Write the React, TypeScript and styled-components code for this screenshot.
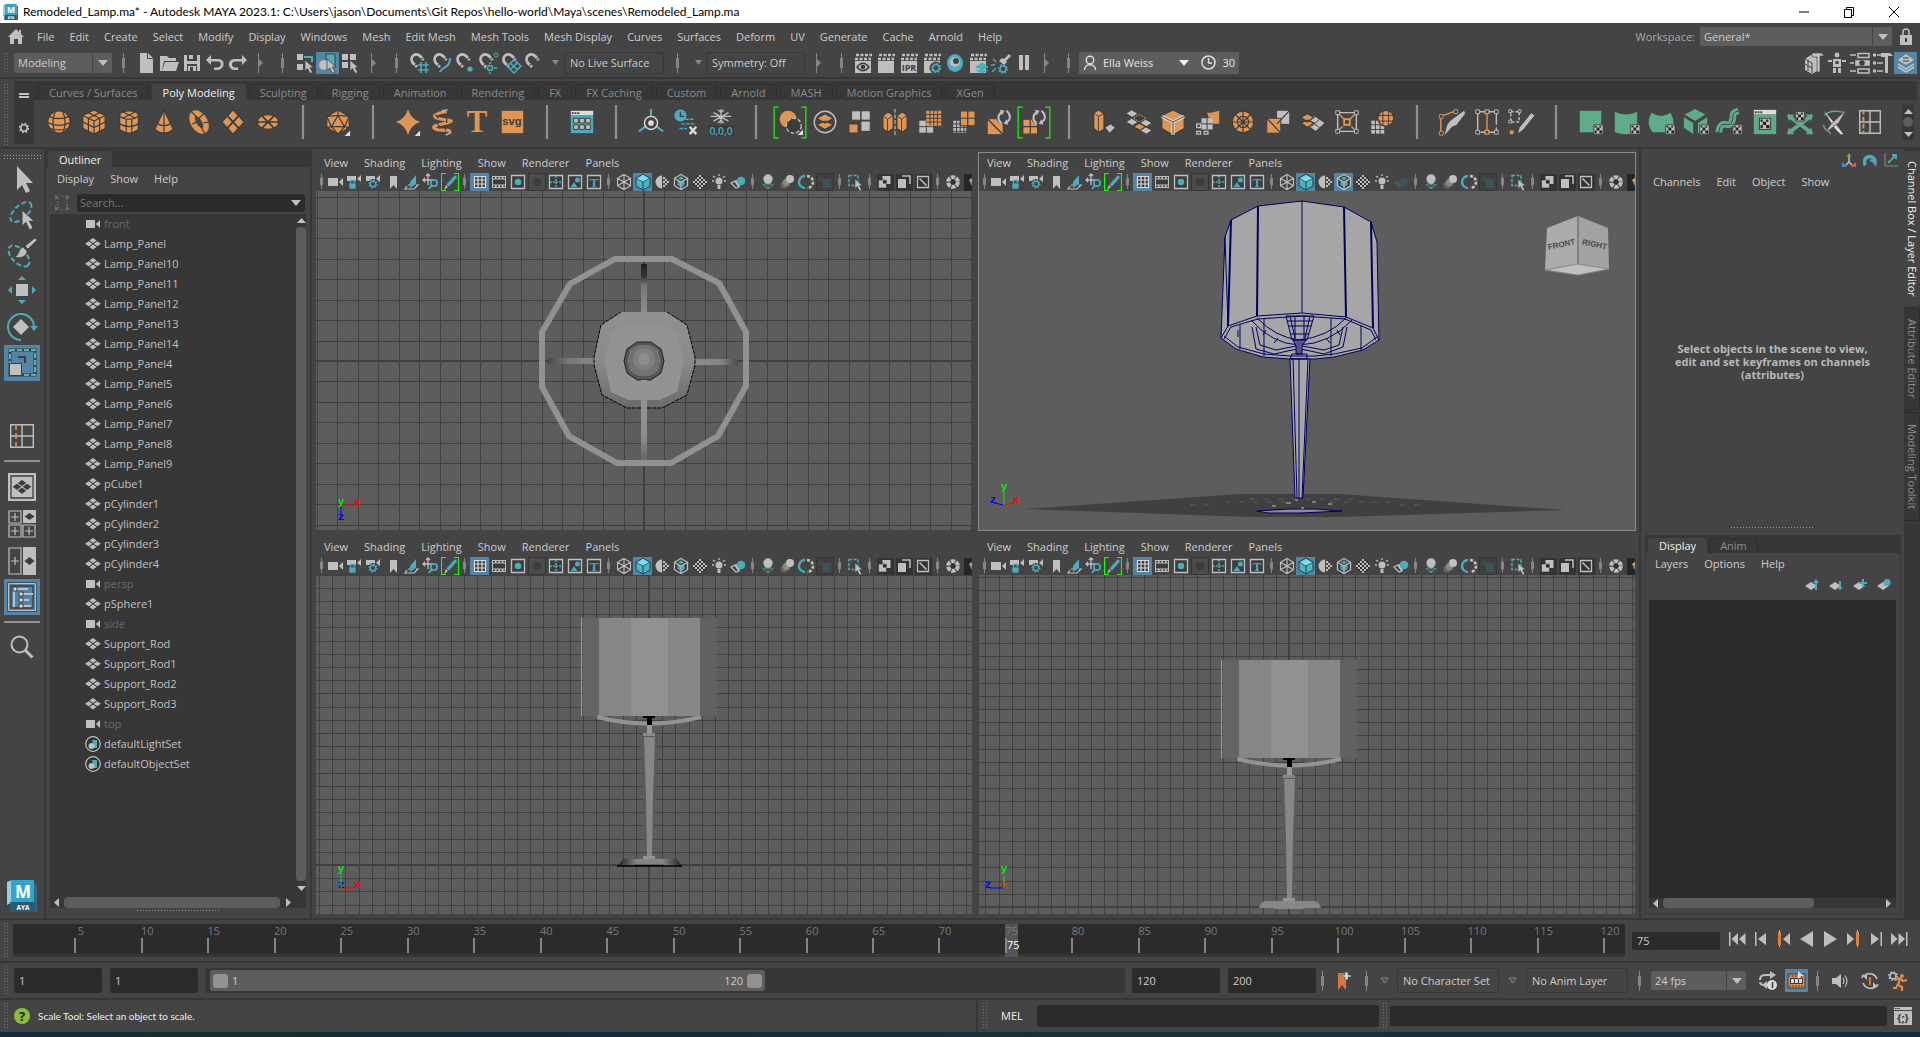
import React from "react";
import styled, { createGlobalStyle, css } from "styled-components";

const c = {
  bg: "#444444",
  dark: "#373737",
  deep: "#2b2b2b",
  mid: "#5d5d5d",
  text: "#cccccc",
  dim: "#8c8c8c",
  grey: "#bfbfbf",
  teal: "#4aacbc",
  orange: "#df9553",
  green: "#5fad88",
  blue: "#5285a6",
};

const Global = createGlobalStyle`
  * { box-sizing: border-box; }
  body { margin: 0; background: ${c.bg}; }
  button, input, select { font: inherit; color: inherit; border: 0; margin: 0; padding: 0; background: none; border-radius: 0; }
  ul { list-style: none; margin: 0; padding: 0; }
`;

const Shell = styled.div`
  min-height: 100vh;
  display: flex;
  flex-direction: column;
  font: 11px/14px "Open Sans", "Noto Sans", sans-serif;
  color: ${c.text};
  background: ${c.bg};
`;

/* ---------- shared parts ---------- */
const Svg = styled.svg<{ $w: number; $h?: number }>`
  display: block;
  flex: none;
  width: ${(p) => p.$w}px;
  height: ${(p) => p.$h ?? p.$w}px;
`;
const IconButton = styled.button<{ $w: number; $h: number; $on?: boolean }>`
  display: flex;
  flex: none;
  align-items: center;
  justify-content: center;
  width: ${(p) => p.$w}px;
  height: ${(p) => p.$h}px;
  background: ${(p) => (p.$on ? c.blue : "transparent")};
`;
const DotsV = styled.div`
  flex: none;
  width: 5px;
  align-self: stretch;
  margin: 2px 0;
  background: radial-gradient(circle, #858585 0 1px, transparent 1px) 0 0 / 3px 3px;
  opacity: 0.7;
`;
const DotsH = styled.div<{ $w: number; $h?: number }>`
  flex: none;
  width: ${(p) => p.$w}px;
  height: ${(p) => p.$h ?? 3}px;
  background: radial-gradient(circle, #9a9a9a 0 1px, transparent 1px) 0 0 / 3px 3px;
`;
const SepCell = styled.div<{ $w: number }>`
  flex: none;
  display: flex;
  justify-content: center;
  width: ${(p) => p.$w}px;
`;
const Field = styled.input<{ $w?: number; $h: number; $line?: boolean }>`
  flex: ${(p) => (p.$w ? "none" : "1 1 0")};
  min-width: 0;
  width: ${(p) => (p.$w ? p.$w + "px" : "auto")};
  height: ${(p) => p.$h}px;
  padding: 0 5px;
  border-radius: 2px;
  background: ${(p) => (p.$line ? c.bg : c.deep)};
  border: ${(p) => (p.$line ? "1px solid #373737" : "0")};
`;
const ComboWrap = styled.span<{ $w: number; $h: number }>`
  display: grid;
  flex: none;
  width: ${(p) => p.$w}px;
  height: ${(p) => p.$h}px;
  background: ${c.mid};
  border-radius: 2px;
  select, span { grid-area: 1 / 1; }
  select { appearance: none; padding: 0 22px 0 4px; outline: 0; }
  span {
    justify-self: end;
    display: flex;
    align-items: center;
    justify-content: center;
    width: 20px;
    border-left: 1px solid ${c.bg};
    pointer-events: none;
  }
`;
const Combo = ({ label, value, w, h }: { label: string; value: string; w: number; h: number }) => (
  <ComboWrap $w={w} $h={h}>
    <select aria-label={label} defaultValue={value}>
      <option>{value}</option>
    </select>
    <span>
      <Svg $w={10} $h={6} viewBox="0 0 10 6"><path d="M0 0h10L5 6z" fill={c.grey} /></Svg>
    </span>
  </ComboWrap>
);
const Sep = ({ w = 22, h = 20 }: { w?: number; h?: number }) => (
  <SepCell $w={w}>
    <Svg $w={3} $h={h} viewBox="0 0 3 20" preserveAspectRatio="none">
      <path d="M1 0h1v20H1z" fill="#858585" /><path d="M0 5h3v10H0z" fill="#858585" />
    </Svg>
  </SepCell>
);
const SepTri = ({ w = 22 }: { w?: number }) => (
  <SepCell $w={w}>
    <Svg $w={5} $h={20} viewBox="0 0 5 20"><path d="M0 0h1v20H0zM1 6l4 4-4 4z" fill="#858585" /></Svg>
  </SepCell>
);
const MenuRow = styled.nav<{ $pad?: number; $h: number; $gap?: number }>`
  display: flex;
  flex: none;
  align-items: center;
  gap: ${(p) => p.$gap ?? 16}px;
  height: ${(p) => p.$h}px;
  padding-left: ${(p) => p.$pad ?? 8}px;
  white-space: nowrap;
`;
const Menu = ({ items, pad, h, gap }: { items: string[]; pad?: number; h: number; gap?: number }) => (
  <MenuRow $pad={pad} $h={h} $gap={gap}>{items.map((i) => <button key={i}>{i}</button>)}</MenuRow>
);
const Spacer = styled.div`
  flex: 1;
`;

/* ---------- icons ---------- */
type Draw = React.ReactNode;
const K = "#3c3c3c";
const cursor = (x: number, y: number, s = 1) => (
  <path transform={`translate(${x} ${y}) scale(${s})`} d="M0 0v13l3-3 3 6 3-1.500-3-5.500h4z" fill={c.grey} stroke={K} strokeWidth=".8" />
);
const checker = (x: number, y: number) => (
  <g transform={`translate(${x} ${y})`}>
    <path d="M0 0h10v10H0z" fill={c.grey} stroke={c.bg} />
    <path d="M1 1h2v2H1zM6 1h2v2H6zM3 3h3v3H3zM1 6h2v3H1zM6 6h3v3H6z" fill="#222" />
  </g>
);
const arrows = (x: number, y: number) => (
  <g transform={`translate(${x} ${y})`} fill="none" stroke={c.grey} strokeWidth="2.200">
    <path d="M5 15C0 11 0 5 6 2M10 1c5 4 5 10-1 13" />
    <path d="M3 0l5 1-3 5zM12 16l-5-1 3-5z" fill={c.grey} stroke="none" />
  </g>
);
const magnet = (
  <g transform="rotate(-8 8 8)">
    <path d="M7 15L3.500 10.500C0 4 8-1 12 5l2.500 4" fill="none" stroke={c.grey} strokeWidth="2.800" />
    <path d="M4 14l4-3M12 8l4-2" stroke={c.bg} strokeWidth="1" />
  </g>
);
const clapper = (
  <>
    <path d="M3 9h16v12H3z" fill={c.grey} />
    <path d="M3 7h16M4 3h16" stroke={c.grey} strokeWidth="2.400" strokeDasharray="3 1.500" />
  </>
);
const gear = (x: number, y: number, r: number, col: string) => (
  <g transform={`translate(${x} ${y})`} fill="none" stroke={col}>
    <circle r={r} strokeWidth={r * 0.5} />
    <circle r={r * 1.4} strokeWidth={r * 0.45} strokeDasharray={`${r * 0.55} ${r * 0.55}`} />
  </g>
);
/* checkerboard squares that fall inside a circle of radius r */
const checkDisc = (r: number, from: number) => {
  let d = "";
  for (let y = -r; y < r; y += 2)
    for (let x = -r; x < r; x += 2)
      if ((x + y) % 4 === 0 && x >= from && Math.hypot(x + 1, y + 1) < r) d += `M${9 + x} ${9 + y}h2v2h-2z`;
  return d;
};

const toolIcons: Record<string, Draw> = {
  new: <path d="M5 1h7v6h6v14H5zM13 1l5 5h-5z" fill={c.grey} />,
  open: <path d="M2 4h7l2 2h7v3H6L4 19H2zM7 10h14l-3 9H4z" fill={c.grey} />,
  save: <><path d="M3 3h16v16H3z" fill={c.grey} /><path d="M6 3h10v6H6zM6 12h10v7H6z" fill={c.bg} /><path d="M8 3h4v4H8zM7 14h8v5H7z" fill={c.grey} /><path d="M9 15h3v4H9z" fill={c.bg} /></>,
  undo: <path d="M7 3L2 8l5 5V9.500h7c4 0 4 6-1 6h-3V18h4c7-1 8-11 0-11H7z" fill={c.grey} />,
  redo: <path d="M15 3l5 5-5 5V9.500H8c-4 0-4 6 0 6h3V18H7C0 17 0 7 8 7h7z" fill={c.grey} />,
  hier: <><path d="M3 2h6v6H3zM3 12h6v6H3zM9 4h3M11 8h1v2" fill={c.grey} /><path d="M10 5h8v5" fill="none" stroke={c.teal} strokeWidth="2" />{cursor(11, 8, 0.85)}</>,
  obj: <><path d="M9 2h9v12H9z" fill={c.teal} stroke={K} /><circle cx="7" cy="13" r="5" fill={c.grey} />{cursor(10, 7, 0.9)}</>,
  comp: <><path d="M2 2h6v6H2zM10 2h6v6h-6zM2 10h6v6H2z" fill={c.grey} />{cursor(10, 8, 0.85)}</>,
  mGrid: <>{magnet}<path d="M9 13h11M9 18h11M12 10v11M17 10v11" stroke={c.teal} strokeWidth="1.600" /></>,
  mCurve: <>{magnet}<path d="M8 20c2-6 10-3 10-14" fill="none" stroke={c.teal} strokeWidth="2.200" /></>,
  mPoint: <>{magnet}<circle cx="15" cy="17" r="2.600" fill={c.teal} /></>,
  mCenter: <>{magnet}<g fill="none" stroke={c.teal}><circle cx="12" cy="16" r="2.500" strokeWidth="1.500" /><path d="M12 10v2M12 20v2M6 16h2M16 16h3" strokeWidth="1.500" /><circle cx="18" cy="3" r="2" /></g></>,
  mPlane: <>{magnet}<path d="M13 8l7 6-7 7-7-7zM9 11l8 7M17 10l-8 8" fill="none" stroke={c.teal} strokeWidth="1.500" /></>,
  mLive: magnet,
  rView: <>{clapper}<path d="M5 15c4-5 8-5 12 0-4 5-8 5-12 0z" fill="none" stroke={K} strokeWidth="1.400" /><circle cx="11" cy="15" r="2.300" fill={K} /></>,
  rSeq: clapper,
  ipr: <>{clapper}<text x="11" y="19" fontSize="9" fontWeight="700" textAnchor="middle" fill={K} fontFamily="Open Sans">IPR</text></>,
  rSet: <>{clapper}<circle cx="15" cy="16" r="6.500" fill={c.bg} />{gear(15, 16, 3.2, c.teal)}</>,
  ring: <><ellipse cx="11" cy="11" rx="8" ry="9" fill={c.teal} /><circle cx="11" cy="10" r="5" fill={c.grey} /><circle cx="12" cy="9" r="3" fill={c.bg} /></>,
  rLay: <>{clapper}<path d="M15 11l6 4-6 3-6-3zM9 18l6 3 6-3" fill={c.teal} stroke={c.teal} /></>,
  light: <><path d="M19 2l2 2-5 5 1 1-3 3-5-4 3-3 2 1z" fill={c.grey} /><path d="M1 13h4M3 7l3 3M2 20l4-4" stroke={c.teal} strokeWidth="1.500" />{gear(13, 17, 3, c.teal)}</>,
  pause: <path d="M6 3h4v15H6zM12 3h4v15h-4z" fill={c.grey} />,
  mkit: <><path d="M2 7l6-4 6 3v13l-5 3-7-4z" fill={c.grey} /><path d="M2 7l7 4v10M5 8v11M2 12l7 4" stroke={c.bg} fill="none" /><path d="M9 1h8c2 0 3 1 4 3h-4v16h-3V5H9z" fill={c.grey} stroke={c.bg} strokeWidth=".6" /></>,
  human: <g fill={c.grey}><circle cx="11" cy="3" r="2.400" /><path d="M7 7h8v8H7zM2 8h4v2H2zM16 8h4v2h-4zM7 16h3v5H7zM12 16h3v5h-3z" /><path d="M9.500 9h3v3h-3z" fill={c.bg} /></g>,
  attr: <g fill="none" stroke={c.grey} strokeWidth="1.600"><path d="M1 3h6M1 11h4M1 19h6M9 1.500h11v4H9zM9 17h11v4H9z" /><path d="M7 9h13v4H7z" fill={c.grey} /><circle cx="13" cy="11" r="2" fill={K} stroke={K} /></g>,
  tset: <g fill="none" stroke={c.grey} strokeWidth="1.600"><path d="M5 3h4M5 11h6M5 19h6" /><path d="M1 3h3M1 11h3M1 19h3" strokeWidth="3" /><path d="M9 1h8c2 0 3 2 4 3h-5v17h-3V5H9z" fill={c.grey} stroke="none" /></g>,
  chan: <g><path d="M11 2l8 6-8 5-8-5z" fill={c.grey} /><path d="M3 12l8 5 8-5M3 15l8 5 8-5" stroke={c.grey} fill="none" strokeWidth="1.600" /><path d="M8 6h6M8 9h6" stroke={K} /></g>,
};

const camera = <path d="M1 5h10v8H1zM12 9l4-4v8z" fill={c.grey} />;
const cube = (fill: string, line: string) => (
  <g fill={fill} stroke={line} strokeLinejoin="round"><path d="M9 1l7 4v8l-7 4-7-4V5z" /><path d="M2 5l7 4 7-4M9 9v8" fill="none" /></g>
);
const frame = (inner: Draw) => <><path d="M2.500 2.500h13v13h-13z" fill={K} stroke={c.grey} strokeWidth="1.300" />{inner}</>;
const viewIcons: Record<string, Draw> = {
  cam: camera,
  camLock: <><path d="M1 3h9v5H1zM11 6l4-4v7z" fill={c.grey} /><path d="M3 10h7v6H3z" fill={c.teal} stroke={c.bg} strokeWidth=".6" /><path d="M4.500 10V7.500h4V10" stroke={c.teal} fill="none" strokeWidth="1.400" /></>,
  camGear: <><path d="M1 3h9v5H1zM11 6l4-4v7z" fill={c.grey} /><circle cx="8" cy="11" r="5" fill={c.bg} />{gear(8, 11, 2.8, c.teal)}</>,
  mark: <path d="M6 3h7v13l-3.500-4L6 16z" fill={c.grey} />,
  plane: <><path d="M7 9l6-7v9l-6 4z" fill={c.teal} /><path d="M5 12h2M13 12h2l-4 4H2l2-3" fill="none" stroke={c.grey} strokeWidth="1.200" /></>,
  pan: <><path d="M6 1v11M1 7h10M4 3l2-2 2 2M3 5L1 7l2 2" stroke={c.grey} fill="none" strokeWidth="1.300" /><circle cx="12" cy="10" r="3.200" fill={c.bg} stroke={c.teal} strokeWidth="1.700" /><path d="M10 12l-3 4" stroke={c.teal} strokeWidth="2" /></>,
  pencil: <><path d="M14 2l2 2.500-8 9-2.500-2z" fill={c.teal} /><path d="M5 12l2 2-4 3z" fill={c.grey} /><path d="M5 .5H.5v17H5M13 .5h4.500v17H13" fill="none" stroke="#1f0" strokeWidth="1.200" /></>,
  grid: <path d="M3.500 3.500h11v11h-11zM3.500 7h11M3.500 11h11M7 3.500v11M11 3.500v11" fill={K} stroke="#ddd" strokeWidth="1.200" />,
  film: <><path d="M2 3h14v12H2z" fill={c.grey} /><path d="M3 6.500h12v5H3z" fill={K} /><path d="M3 4.700h12M3 13.300h12" stroke={K} strokeDasharray="2 1.500" strokeWidth="1.400" /></>,
  res: frame(<circle cx="9" cy="9" r="3.300" fill={c.teal} />),
  gate: <><path d="M.5.500h17v17H.5z" fill="#4b4b4b" stroke="#353535" /><circle cx="9" cy="9" r="4" fill={K} /></>,
  chart: frame(<path d="M3 9h12M9 3v12" stroke={c.teal} strokeDasharray="2 1" strokeWidth="1.600" />),
  safe: frame(<><path d="M4.500 14l3.500-5 3.500 5z" fill={c.teal} /><circle cx="11.500" cy="7" r="2.500" fill={c.teal} /></>),
  title: frame(<text x="9" y="13.500" fontSize="13" fontWeight="700" fontFamily="Liberation Serif" textAnchor="middle" fill={c.teal}>T</text>),
  wire: <><path d="M9 1.500l6.500 3.800v7.400L9 16.500l-6.500-3.800V5.300zM2.500 5.300L9 9l6.500-3.700M9 9v7.500M9 1.500V9M2.500 12.700L9 9l6.500 3.700" fill="none" stroke={c.grey} strokeWidth="1.100" /></>,
  shade: <>{cube("#4fb4c4", "#21434b")}<path d="M9 2l6 3.500L9 8.500 3 5.500z" fill="#7fdbe6" /></>,
  half: <><circle cx="9" cy="9" r="6.500" fill="#4c4c4c" /><path d="M9 2.500a6.500 6.500 0 000 13z" fill={c.grey} /><path d={checkDisc(7, 1)} fill={c.grey} /></>,
  wshade: <><path d="M9 1.500l6.500 3.800v7.400L9 16.500l-6.500-3.800V5.300z" fill={K} stroke={c.grey} strokeWidth="1.300" /><path d="M5.500 7l3 2v5l-3-2zM12.500 7l-3 2v5l3-2zM9 3.500l3 1.700-3 1.700-3-1.700z" fill={c.teal} /><path d="M2.500 5.300L9 9l6.500-3.700M9 9v7.500" fill="none" stroke={c.grey} strokeWidth="1.300" /></>,
  check: <><circle cx="9" cy="9" r="6.500" fill="#333" /><path d={checkDisc(7, -7)} fill={c.grey} /></>,
  bulb: <><circle cx="9" cy="8" r="3.500" fill={c.grey} /><path d="M7.500 12h3v4h-3z" fill={c.grey} /><path d="M9 1v2M3 3l2 1.500M15 3l-2 1.500M2 8h2M14 8h2" stroke={c.grey} strokeWidth="1.300" /></>,
  shadow: <><path d="M2 10l5 5 3-1-4-6z" fill={K} stroke={c.grey} strokeWidth="1.200" /><path d="M5 8l4 6 2-1-3-6z" fill={c.grey} /><circle cx="12" cy="8" r="4.300" fill={c.teal} /></>,
  shadowOff: <><path d="M2 9l5 6 3-2-4-6z" fill="#4f5658" /><circle cx="12" cy="9" r="4.300" fill="#3b5358" /></>,
  ao: <><path d="M3 12l6 4 6-4-6-3z" fill={c.teal} /><path d="M4 12l5 2 5-2M6 14l6-3M12 14l-6-3" stroke={c.bg} fill="none" /><circle cx="9" cy="6" r="4.700" fill={c.grey} /></>,
  blur: <><circle cx="6" cy="12" r="3.500" fill="#666" /><circle cx="8.500" cy="9.500" r="3.700" fill="#888" /><circle cx="12" cy="6" r="4" fill={c.grey} /></>,
  aa: <><path d="M8 3a6 6 0 000 12" fill="none" stroke={c.teal} strokeWidth="2.400" /><path d="M10 3a6 6 0 010 12" fill="none" stroke={c.grey} strokeWidth="2.600" strokeDasharray="3 1.500" /></>,
  dof: <><path d="M.5.500h17v17H.5z" fill="#404040" stroke="#353535" /><path d="M7 6h8v9H7z" fill="#3b5358" /><path d="M3 4h4v4H3z" fill="#3a4a4d" /></>,
  iso: <><path d="M3 2.500h9v10H3z" fill="none" stroke={c.teal} strokeWidth="1.600" strokeDasharray="3 1.500" />{cursor(9, 6, 0.75)}</>,
  xray: <><path d="M1 1h17v17H1z" fill="#333" /><path d="M6.500 3h8v8h-8z" fill={c.grey} /><path d="M2.500 7h8v8h-8z" fill={c.grey} stroke="#333" strokeWidth=".6" /><path d="M7 7.500h3v3H7z" fill="#222" /></>,
  xrayJ: <><path d="M1 1h17v17H1z" fill="#333" /><path d="M7 3h8v8" fill="none" stroke={c.grey} strokeWidth="1.500" /><path d="M3 6h8v9H3z" fill={c.grey} /></>,
  xrayA: <><path d="M1 1h17v17H1z" fill="#333" /><path d="M3.500 3.500h11v11h-11z" fill="none" stroke={c.grey} strokeWidth="1.300" /><path d="M5.500 5.500l7 7" stroke={c.grey} strokeWidth="1.600" /></>,
  iris: <><circle cx="9" cy="9" r="4.800" fill="none" stroke={c.grey} strokeWidth="4" strokeDasharray="4 1" /><circle cx="9" cy="9" r="2.500" fill="#333" /></>,
  color: <><path d="M1 1h17v17H1z" fill="#262626" /><path d="M9 5a5 5 0 000 8z" fill="#3f8fd0" /><path d="M9 5q-3 1-3 3l3 1z" fill="#e8a33a" /></>,
};

const og = { fill: c.orange, stroke: K, strokeWidth: 1.3 };
const gr = { fill: c.grey, stroke: K, strokeWidth: 1 };
const gn = { fill: c.green };
const bar = <path d="M14 0h2v30h-2z" fill="#8f8f8f" />;
const brackets = <path d="M3 -1H-2v33h5M27 -1h5v33h-5" stroke="#1f0" strokeWidth="1.300" fill="none" />;
const shelfIcons: [string, Draw][] = [
  ["Polygon Sphere", <g {...og}><circle cx="15" cy="15" r="12" /><path d="M4 9q11 5 22 0M3 16q12 5 24 0M5 22q10 3 20 0M11 4q-5 11 0 23M19 4q5 11 0 23" fill="none" /></g>],
  ["Polygon Cube", <g {...og}><path d="M15 2l12 6v14l-12 6-12-6V8z" /><path d="M3 8l12 6 12-6M15 14v14M3 15l12 6 12-6M9 5l12 6v14M21 5L9 11v14" fill="none" /></g>],
  ["Polygon Cylinder", <g {...og}><path d="M5 7v16q10 8 20 0V7z" /><ellipse cx="15" cy="7.500" rx="10" ry="4.500" /><path d="M5 17q10 6 20 0M12 12v16M18 12v16M8 4l14 7M22 4L8 11" fill="none" /></g>],
  ["Polygon Cone", <g {...og}><path d="M15 2l10 21q-10 8-20 0z" /><path d="M15 2v25M8 17q7 4 14 0" fill="none" /></g>],
  ["Polygon Torus", <g><ellipse cx="15" cy="15" rx="6" ry="10.500" transform="rotate(-32 15 15)" fill="none" stroke={c.orange} strokeWidth="6" /><path d="M6 3l6 6M20 6l-5 5M27 15l-7 1M21 27l-4-7M8 17l5-2" stroke={K} strokeWidth="1.300" /></g>],
  ["Polygon Plane", <g {...og}><path d="M15 2l12 13-12 13L3 15z" /><path d="M9 8.500l12 13M21 8.500l-12 13" strokeWidth="2" /></g>],
  ["Polygon Disc", <g {...og}><ellipse cx="15" cy="15" rx="11.500" ry="8" /><path d="M3 15h24M8 8l14 14M22 8L8 22" strokeWidth="1.800" /></g>],
  ["", bar],
  ["Platonic Solid", <g {...og}><path d="M15 2l12 7v12l-12 7-12-7V9z" /><path d="M15 8l7 12H8zM15 2v6M3 9l12-1 12 1M3 9l5 11-5 1M27 9l-5 11 5 1M8 20l7 8 7-8" fill="none" /><path d="M28 24v6h-6z" fill="#ddd" stroke="none" /></g>],
  ["", bar],
  ["Super Shape", <g><path d="M15 1q3 11 13 14-10 3-13 14Q12 18 2 15 12 12 15 1z" fill={c.orange} /><path d="M28 24v6h-6z" fill="#ddd" /></g>],
  ["Sweep Mesh", <g fill="none"><path d="M20 4C10 5 1 9 12 11.500s16 1 11 3.500S2 18 7 22s17-1 16 4" stroke={c.orange} strokeWidth="3.400" /><path d="M8 7l3 4M20 10v6M10 16l3 6M18 19l1 5" stroke={K} strokeWidth="1.300" /><path d="M15 3l6-1M19 29l6-3" stroke={c.grey} strokeWidth="1.600" /></g>],
  ["Type", <text x="15" y="26" fontSize="33" fontFamily="Liberation Serif" fontWeight="700" textAnchor="middle" fill={c.orange}>T</text>],
  ["SVG", <g><path d="M4 3h23v24H4z" fill={c.orange} /><text x="15" y="18" fontSize="12" fontFamily="Liberation Sans" fontWeight="700" textAnchor="middle" fill={K}>svg</text></g>],
  ["", bar],
  ["Content Browser", <g><path d="M3 3h24v5H3z" fill="#ddd" /><path d="M3 8h24v19H3z" fill={c.teal} /><path d="M4 5.500h8" stroke={K} strokeWidth="2" strokeDasharray="2 1" /><path d="M6 11h5v5H6zM12.500 11h5v5h-5zM19 11h5v5h-5zM6 18h5v5H6zM12.500 18h5v5h-5zM19 18h5v5h-5z" {...gr} /></g>],
  ["", bar],
  ["Center Pivot", <g fill="none"><path d="M15 1v8M9 20l-7 5M21 20l7 5" stroke={c.teal} strokeWidth="2.200" /><circle cx="15" cy="16" r="7" stroke="#ddd" strokeWidth="1.500" /><circle cx="15" cy="16" r="3" fill="#ddd" /></g>],
  ["Delete History", <g><circle cx="9" cy="8" r="6.500" fill={c.teal} /><path d="M9 4v5h4" stroke={K} strokeWidth="1.500" fill="none" /><path d="M14 12h10M10 17h14M8 22h8" stroke={c.teal} strokeWidth="1.500" strokeDasharray="4 1" /><path d="M19 20l7 8M26 20l-7 8" stroke="#ddd" strokeWidth="2.500" /></g>],
  ["Freeze Transformations", <g><path d="M2 19h27v11H2z" fill="#3a3a3a" /><path d="M15 1v16M7 5l16 9M23 5L7 14M4 9h22M12 2l3 3 3-3M12 16l3-3 3 3" stroke={c.grey} strokeWidth="1.400" fill="none" /><text x="15" y="29" fontSize="11" fontFamily="Open Sans" fontWeight="600" textAnchor="middle" fill={c.teal}>0,0,0</text></g>],
  ["", bar],
  ["Duplicate Special", <g fill="none">{brackets}<circle cx="13" cy="12" r="9" fill={c.orange} /><circle cx="19" cy="19" r="8" fill={K} stroke={c.grey} strokeWidth="1.500" strokeDasharray="4 2" /><path d="M29 23v6h-6z" fill="#ddd" /></g>],
  ["Combine", <g><circle cx="15" cy="15" r="11.500" fill="none" stroke={c.grey} strokeWidth="1.600" /><path d="M15 14l9 4-9 5-9-5zM15 6l9 5-9 5-9-5z" {...og} /></g>],
  ["Separate", <g><path d="M6 3h10v10H6zM16 3h10v10H16zM16 14h10v11H16z" {...gr} /><path d="M3 17h10v10H3z" {...og} /></g>],
  ["Mirror", <g><path d="M2 8l6-4 5 4v14l-6 4-5-4zM17 8l6-4 5 4v14l-5 4-6-4z" {...og} /><path d="M2 8l5 4 6-4M7 12v14M17 8l5 4 6-4M22 12v14" fill="none" stroke={K} /><path d="M15 1v28" stroke="#ddd" strokeDasharray="4 2" /></g>],
  ["Smooth", <g><path d="M3 13h16v14H3z" {...gr} /><path d="M11 13v14M3 20h16" stroke={K} /><path d="M11 3h16v16H11z" fill={c.orange} /><path d="M15 3v16M19 3v16M23 3v16M11 7h16M11 11h16M11 15h16" stroke={K} /></g>],
  ["Reduce", <g><path d="M3 13h15v14H3z" {...gr} /><path d="M7 13v14M11 13v14M15 13v14M3 17h15M3 21h15M3 25h15" stroke={K} /><path d="M11 3h16v16H11zM19 3v16M11 11h16" {...og} /></g>],
  ["Remesh", <g><path d="M3 12h16v16H3z" fill={c.orange} /><path d="M3 12l16 16" stroke={K} strokeWidth="1.500" /><circle cx="20" cy="10" r="8" fill={c.bg} />{arrows(13, 2)}</g>],
  ["Retopologize", <g>{brackets}<path d="M3 12h16v16H3zM11 12v16M3 20h16" {...og} /><circle cx="20" cy="10" r="8" fill={c.bg} />{arrows(13, 2)}</g>],
  ["", bar],
  ["Extrude", <g><path d="M16 21l6-4 5 4-6 6z" {...gr} /><path d="M4 5l5-3 6 4v17l-6 3-5-4z" {...og} /><path d="M4 5l5 4 6-3M9 9v17" stroke={K} fill="none" /></g>],
  ["Bridge", <g><path d="M7 2l7 4-6 4-7-4zM22 12l7 4-6 4-7-4zM7 11l7 4-6 4-7-4zM22 20l7 4-6 4-7-4z" {...gr} /><path d="M15 7l7 4-6 4-7-4z" fill={K} stroke={c.orange} strokeDasharray="2 1" /><path d="M15 16l7 4-6 4-7-4z" {...og} /></g>],
  ["Bevel", <g><path d="M15 2l12 6v14l-12 7-12-7V8z" {...og} /><path d="M3 9l12 6 12-6M15 15v14" fill="none" stroke="#ddd" strokeWidth="3.500" /><path d="M3 9l12 6 12-6M15 15v14" fill="none" stroke={K} /></g>],
  ["Merge", <g><path d="M14 5h4l9-2v14h-9z" fill={c.orange} /><path d="M8 11h12v12H8z" fill={c.grey} /><path d="M3 17h4v4H3zM3 25h4v3H3zM11 25h4v3h-4z" fill="none" stroke={c.grey} strokeWidth="1.500" /><path d="M8 17h12M14 11v12" stroke={K} /></g>],
  ["Circularize", <g {...og}><circle cx="15" cy="15" r="11.500" /><circle cx="15" cy="15" r="6" fill="none" /><path d="M3 15h24M15 3v24M7 7l16 16M23 7L7 23" /></g>],
  ["Multi-Cut Fill", <g><path d="M14 3h13v14H14z" fill={c.grey} /><path d="M3 11h15v16H3z" fill={c.orange} stroke={K} /><path d="M3 11l15 16M14 17L27 3" stroke={K} strokeWidth="1.300" /></g>],
  ["Flatten", <g><path d="M16 8l12 8-10 9-12-8zM11 13l11 8M22 12l-10 9" {...gr} /><path d="M9 6l7 4-7 5-7-5zM9 13l7 3-7 5-7-5z" {...og} /></g>],
  ["Collapse", <g fill="none"><path d="M5 5h20v20H5z" stroke={c.grey} strokeWidth="1.500" /><path d="M7 7l16 16M23 7L7 23" stroke={c.orange} strokeWidth="1.500" strokeDasharray="7 2" /><path d="M3 3h4v4H3zM23 3h4v4h-4zM3 23h4v4H3zM23 23h4v4h-4z" fill={K} stroke={c.grey} /><path d="M12 12h6v6h-6z" fill={K} stroke={c.orange} strokeWidth="2" /></g>],
  ["Project Curve", <g><path d="M3 13h15v15H3z" {...gr} /><path d="M8 13v15M13 13v15M3 18h15M3 23h15" stroke={K} /><circle cx="19" cy="11" r="8.500" {...og} /><path d="M11 8h16M11 14h16M16 3v16M22 3v16" stroke={K} /></g>],
  ["", bar],
  ["Multi-Cut", <g><path d="M3 27V9l16-6" stroke={c.orange} strokeWidth="1.500" fill="none" /><path d="M1.500 7h4v4h-4zM17 2h4v4h-4zM1.500 25h4v4h-4z" fill={K} stroke={c.orange} /><path d="M28 3l1 3-9 12-5 2-8 9 3-11 3-4z" fill={c.grey} /></g>],
  ["Insert Edge Loop", <g fill="none"><path d="M5 4v22h20V4z" stroke={c.grey} strokeWidth="1.500" strokeDasharray="22 3" /><path d="M15 4v22" stroke={c.orange} strokeWidth="1.500" /><path d="M3 2h4v4H3zM23 2h4v4h-4zM3 24h4v4H3zM23 24h4v4h-4z" fill={K} stroke={c.grey} /><path d="M13 2h4v4h-4zM13 24h4v4h-4z" fill={K} stroke={c.orange} strokeWidth="1.500" /></g>],
  ["Quad Draw", <g fill="none"><path d="M4 4h9v11H4z" stroke={c.grey} strokeDasharray="3 2" strokeWidth="1.500" /><path d="M2 2h3v3H2zM12 2h3v3h-3zM2 13h3v3H2z" fill={K} stroke={c.grey} /><path d="M3 24h4v4H3z" fill={c.orange} /><path d="M26 5l4 3-13 16-6 4 2-7z" fill={c.grey} stroke={K} /></g>],
  ["", bar],
  ["Planar Mapping", <g><path d="M3 3h23v23H3z" {...gn} />{checker(18, 18)}</g>],
  ["Cylindrical Mapping", <g><path d="M3 4q12 6 24 0v22q-12 4-24 0z" {...gn} />{checker(20, 18)}</g>],
  ["Spherical Mapping", <g><path d="M5 5q10 7 20 0 7 10 0 21H6Q-2 16 5 5z" {...gn} />{checker(20, 18)}</g>],
  ["Automatic Mapping", <g><path d="M14 1l11 6-11 7L3 7zM2 10l10 6v12L2 21zM27 10l-10 6v11l10-5z" {...gn} />{checker(19, 18)}</g>],
  ["Contour Stretch", <g><path d="M3 26c2-16 11-3 14-11s-2-9 7-12" fill="none" stroke={c.green} strokeWidth="7" /><path d="M3 26c2-16 11-3 14-11s-2-9 7-12" fill="none" stroke={K} />{checker(18, 18)}</g>],
  ["UV Editor", <g><path d="M3 2h24v5H3z" fill="#ddd" /><path d="M3 7h24v21H3z" {...gn} /><path d="M4 4.500h8" stroke={K} strokeWidth="2" strokeDasharray="2 1" /><g transform="translate(9 11) scale(1.200)">{checker(0, 0)}</g></g>],
  ["Unfold", <g><path d="M5 10l20 15M25 10L5 25" stroke={c.green} strokeWidth="4" /><path d="M1 7h8l-6 7zM29 7h-8l6 7zM1 28h8l-6-7zM29 28h-8l6-7z" {...gn} />{checker(10, 4)}</g>],
  ["Cut and Sew", <g><path d="M4 8c4-6 14-5 22-3M3 18c0 8 6 4 7 10" fill="none" stroke={c.green} strokeWidth="1.600" /><path d="M3 3l15 17 6 8-3 0-6-6z" fill="#ddd" /><path d="M27 2l-8 14-8 6-7 5 6-9z" fill={c.grey} stroke={K} strokeWidth=".7" /></g>],
  ["Grid Layout", <g fill="none"><path d="M4 3h22v24H4zM15 3v24M4 15h22" stroke={c.grey} strokeWidth="1.500" /><path d="M8 2v26" stroke={c.orange} strokeWidth="2" strokeDasharray="5 2.500" /></g>],
];

const quad = (f: string) => <path d="M10 0l4.500 3.200-4.500 3.200-4.500-3.200zM4.700 4l4.500 3.200-4.500 3.200L.2 7.200zM15.300 4l4.500 3.200-4.500 3.200-4.500-3.200zM10 8l4.500 3.200-4.500 3.200-4.500-3.200z" fill={f} />;
const plusBox = (x: number, y: number, h = 12) => (
  <g stroke={c.grey} fill="none" strokeWidth="1.200"><path d={`M${x} ${y}h12v${h}h-12z`} /><path d={`M${x + 6} ${y + h / 2 - 4}v8M${x + 2} ${y + h / 2}h8`} /></g>
);
const toolbox: [string, Draw, boolean, number][] = [
  ["Select Tool", <path d="M13 6v24l5-5 4 8 4-2-4-8h7z" fill={c.grey} />, false, 38],
  ["Lasso Tool", <><ellipse cx="17" cy="14" rx="13" ry="6.500" transform="rotate(-42 17 14)" fill="none" stroke={c.teal} strokeWidth="2" strokeDasharray="5 2.500" />{cursor(18, 12, 1.25)}</>, false, 37],
  ["Paint Selection Tool", <><ellipse cx="15" cy="21" rx="13" ry="7" transform="rotate(45 15 21)" fill="none" stroke={c.teal} strokeWidth="2" strokeDasharray="5 2.500" /><path d="M31 3l2 2-9 9-3-3zM19 12l4 4c0 5-6 8-12 6 5-3 3-8 8-10z" fill={c.grey} stroke={K} strokeWidth=".7" /></>, false, 37],
  ["Move Tool", <><path d="M12 12h12v12H12z" fill={c.grey} /><path d="M18 4l4 4h-8zM18 32l4-4h-8zM4 18l4-4v8zM32 18l-4-4v8z" fill={c.teal} /></>, false, 37],
  ["Rotate Tool", <><path d="M17 31A13 13 0 1130 17" fill="none" stroke={c.teal} strokeWidth="2" /><path d="M26 17h8l-4 5z" fill={c.teal} /><path d="M17 10l8 8-8 8-8-8z" fill={c.grey} /></>, false, 37],
  ["Scale Tool", <><path d="M6 5h25v25H6z" fill="none" stroke={K} strokeWidth="3" /><path d="M6 5h25v25H6z" fill="none" stroke="#5fd3e0" strokeWidth="1.500" strokeDasharray="5 2" /><path d="M14 12h7v6" fill="none" stroke={K} strokeWidth="2" /><path d="M5.500 18.500h12v12h-12z" fill={c.grey} stroke={K} /></>, true, 36],
];

/* ---------- title, menu and status bars ---------- */
const TitleBar = styled.header`
  display: flex;
  align-items: center;
  flex: none;
  height: 23px;
  padding: 0 20px 0 3px;
  gap: 5px;
  background: #fff;
  color: #000;
  h1 { font: 12px/16px Lato, "Open Sans", sans-serif; margin: 0; flex: 1; }
`;
const WinButtons = styled.div`
  display: flex;
  gap: 33px;
`;
const MenuBar = styled.div`
  display: flex;
  align-items: center;
  flex: none;
  height: 27px;
  padding: 0 8px;
`;
const Workspace = styled.label`
  display: flex;
  align-items: center;
  gap: 5px;
  color: #aaa;
  select { color: ${c.text}; }
`;
const StatusLine = styled.div`
  display: flex;
  align-items: center;
  flex: none;
  height: 29px;
  padding: 0 3px 2px 3px;
  border-bottom: 2px solid ${c.dark};
`;
const Account = styled.button`
  display: flex;
  flex: none;
  align-items: center;
  gap: 6px;
  width: 160px;
  height: 22px;
  padding: 0 4px;
  background: ${c.mid};
  color: #e6e6e6;
  span { flex: 1; text-align: left; }
`;
const Gap = styled.div<{ $w: number }>`
  flex: none;
  width: ${(p) => p.$w}px;
`;
const MayaLogo = ({ w, h }: { w: number; h: number }) => (
  <Svg $w={w} $h={h} viewBox="0 0 30 32">
    <path d="M0 2l5-2v22l-5 3z" fill="#8fd0e4" /><path d="M4 0h23v22H4z" fill="#38a3c9" /><path d="M27 2l3 3v27H3V22h24z" fill="#2f6a86" />
    <path d="M3 22h25v10H3z" fill="#2b5c76" />
    <text x="16" y="18" fontSize="17" fontWeight="700" textAnchor="middle" fill="#fff" fontFamily="Open Sans">M</text>
    <text x="16" y="29.500" fontSize="6.500" fontWeight="700" textAnchor="middle" fill="#fff" fontFamily="Open Sans">AYA</text>
  </Svg>
);
const Tools = ({ names, on }: { names: string[]; on?: string }) => (
  <>
    {names.map((n) => (
      <IconButton key={n} aria-label={n} $w={23} $h={22} $on={n === on}><Svg $w={22} viewBox="0 0 22 22">{toolIcons[n]}</Svg></IconButton>
    ))}
  </>
);
const SmallTri = ({ w }: { w: number }) => (
  <IconButton $w={w} $h={20} aria-label="Options"><Svg $w={7} $h={5} viewBox="0 0 7 5"><path d="M0 0h7L3.500 5z" fill="#8a8a8a" /></Svg></IconButton>
);

/* ---------- shelf ---------- */
const Shelf = styled.section`
  display: flex;
  flex: none;
  height: 70px;
  padding: 2px 3px 0 3px;
  border-bottom: 2px solid ${c.dark};
`;
const ShelfSide = styled.div`
  display: flex;
  flex-direction: column;
  align-items: center;
  justify-content: space-between;
  width: 20px;
  height: 63px;
  margin-left: 6px;
  padding: 12px 0 10px;
  background: ${c.dark};
`;
const ShelfBody = styled.div`
  flex: 1;
  min-width: 0;
  display: flex;
  flex-direction: column;
`;
const ShelfTabs = styled.div`
  display: flex;
  align-items: stretch;
  height: 19px;
  padding: 3px 0 0 4px;
  gap: 3px;
  background: ${c.dark};
`;
const Tab = styled.button<{ $on?: boolean }>`
  padding: 0 10px;
  border: 1px solid ${(p) => (p.$on ? c.bg : "#2f2f2f")};
  border-bottom: 0;
  border-radius: 3px 3px 0 0;
  background: ${(p) => (p.$on ? c.bg : c.dark)};
  color: ${(p) => (p.$on ? "#eeeeee" : c.dim)};
  white-space: nowrap;
`;
const ShelfIcons = styled.div`
  flex: 1;
  display: flex;
  align-items: center;
  padding-bottom: 3px;
`;
const ShelfGrid = styled.div`
  flex: 1;
  display: grid;
  grid-template-columns: repeat(${shelfIcons.length}, 1fr);
  padding: 0 15px 0 8px;
  svg { overflow: visible; }
`;
const ShelfCell = styled.div`
  display: flex;
  align-items: center;
  justify-content: center;
`;
const ShelfScroll = styled.div`
  display: flex;
  flex-direction: column;
  align-items: center;
  justify-content: space-between;
  width: 12px;
  height: 35px;
  margin-right: 3px;
  padding: 3px 0;
  background: ${c.dark};
`;

/* ---------- main ---------- */
const Main = styled.main`
  flex: 1;
  display: flex;
  gap: 2px;
  background: ${c.dark};
`;
const Toolbox = styled.aside`
  flex: none;
  display: flex;
  flex-direction: column;
  align-items: center;
  width: 44px;
  padding: 5px 0 6px;
  background: ${c.bg};
`;
const ToolGap = styled.div`
  flex: none;
  height: 37px;
`;
const Rule = styled.div`
  width: 36px;
  height: 2px;
  margin: 6px 0;
  background: #8f8f8f;
`;
const Outliner = styled.section`
  flex: none;
  display: flex;
  flex-direction: column;
  width: 264px;
`;
const PanelTabs = styled.div<{ $h: number }>`
  display: flex;
  gap: 2px;
  flex: none;
  height: ${(p) => p.$h}px;
  padding: 2px 2px 0;
  background: ${c.dark};
`;
const PanelBody = styled.div`
  flex: 1;
  display: flex;
  flex-direction: column;
  padding: 0 4px;
  background: ${c.bg};
`;
const SearchRow = styled.div`
  display: flex;
  align-items: center;
  gap: 7px;
  height: 24px;
  padding: 1px 1px 0 5px;
`;
const SearchBox = styled.label`
  flex: 1;
  display: flex;
  align-items: center;
  height: 18px;
  padding-right: 4px;
  background: ${c.deep};
  border-radius: 2px;
  input { flex: 1; min-width: 0; padding: 0 3px; outline: 0; }
  input::placeholder { color: #7c7c7c; opacity: 1; }
`;
const Tree = styled.div`
  flex: 1;
  display: grid;
  grid-template: 1fr 11px / 1fr 10px;
  background: ${c.dark};
`;
const TreeItem = styled.li<{ $dim?: boolean }>`
  display: flex;
  align-items: center;
  gap: 3px;
  height: 20px;
  padding-left: 35px;
  color: ${(p) => (p.$dim ? "#6c6c6c" : "#c0c0c0")};
`;
const ScrollV = styled.div`
  display: flex;
  flex-direction: column;
  align-items: center;
  gap: 4px;
  padding: 3px 0 6px;
`;
const ScrollH = styled.div`
  display: flex;
  align-items: center;
  gap: 5px;
  padding: 0 5px 0 3px;
`;
const Thumb = styled.div<{ $grow?: number }>`
  flex: ${(p) => p.$grow ?? 1} 0 0;
  align-self: stretch;
  border-radius: 4px;
  background: ${c.mid};
`;
const Rest = styled.div<{ $grow: number }>`
  flex: ${(p) => p.$grow} 0 0;
`;
const PanelFoot = styled.div<{ $h: number }>`
  display: flex;
  flex: none;
  align-items: flex-start;
  justify-content: center;
  height: ${(p) => p.$h}px;
  padding-top: 1px;
`;
const Arrow = ({ d }: { d: "up" | "down" | "left" | "right" }) => {
  const p = { up: "M0 6h9L4.500 1z", down: "M0 1h9L4.500 6z", left: "M6 0v9L1 4.500z", right: "M1 0v9l5-4.500z" }[d];
  const vert = d === "up" || d === "down";
  return <Svg $w={vert ? 9 : 6} $h={vert ? 6 : 9} viewBox={vert ? "0 0 9 6" : "0 0 6 9"}><path d={p} fill={c.grey} /></Svg>;
};

const Viewports = styled.section`
  flex: 1;
  min-width: 0;
  display: grid;
  grid-template: 1fr 1fr / 1fr 1fr;
  gap: 5px;
  padding: 3px;
  background: ${c.bg};
`;
const ViewPanel = styled.section<{ $active?: boolean }>`
  display: flex;
  flex-direction: column;
  min-width: 0;
  border: 1px solid ${(p) => (p.$active ? "#8a8a8a" : c.bg)};
`;
const ViewTools = styled.div`
  display: flex;
  flex: none;
  align-items: center;
  height: 19px;
  overflow: hidden;
`;
const Canvas = styled.svg`
  display: block;
  flex: 1 1 0;
  min-height: 0;
  width: 100%;
  background: ${c.mid};
`;

const Side = styled.aside`
  flex: none;
  display: flex;
  flex-direction: column;
  width: 263px;
  background: ${c.bg};
`;
const SideIcons = styled.div`
  display: flex;
  justify-content: flex-end;
  gap: 7px;
  height: 24px;
  padding: 4px 6px 0 0;
`;
const Message = styled.p`
  flex: 1;
  display: flex;
  align-items: center;
  justify-content: center;
  margin: 0;
  padding: 7px 30px 0;
  text-align: center;
  font-weight: 700;
  line-height: 13px;
  color: #b8b8b8;
`;
const Layers = styled.section`
  flex: none;
  display: flex;
  flex-direction: column;
  height: 379px;
  margin: 0 3px 4px 4px;
  border: 1px solid ${c.dark};
`;
const LayerIcons = styled.div`
  display: flex;
  justify-content: flex-end;
  align-items: center;
  gap: 9px;
  height: 26px;
  padding: 0 8px 4px 0;
`;
const LayerList = styled.div`
  flex: 1;
  margin: 0 4px 0 3px;
  background: ${c.deep};
`;
const LayerScroll = styled(ScrollH)`
  height: 10px;
  margin: 0 4px 5px 3px;
  background: ${c.dark};
`;
const SideTabs = styled.div`
  flex: none;
  display: flex;
  flex-direction: column;
  gap: 2px;
  width: 16px;
  margin-left: -2px;
  padding-top: 2px;
`;
const SideTab = styled.button<{ $on?: boolean; $h: number }>`
  height: ${(p) => p.$h}px;
  writing-mode: vertical-rl;
  line-height: 14px;
  text-align: center;
  border: 1px solid ${(p) => (p.$on ? c.bg : "#2c2c2c")};
  border-left: 0;
  border-radius: 0 3px 3px 0;
  background: ${(p) => (p.$on ? c.bg : c.dark)};
  color: ${(p) => (p.$on ? "#eee" : c.dim)};
`;

/* ---------- bottom bars ---------- */
const Bar = styled.section<{ $h: number }>`
  display: flex;
  flex: none;
  align-items: center;
  height: ${(p) => p.$h}px;
  padding: 0 8px 0 3px;
  border-top: 2px solid ${c.dark};
  background: ${c.bg};
`;
const Timeline = styled.div`
  flex: 1;
  display: flex;
  height: 33px;
  margin-left: 5px;
  padding: 0 8px;
  background: linear-gradient(${c.deep} 0 30px, ${c.dark} 30px);
`;
const Frame = styled.div<{ $tick: boolean; $now: boolean }>`
  flex: 1 1 0;
  min-width: 0;
  display: flex;
  flex-direction: column;
  align-items: center;
  color: #7a7a7a;
  line-height: 13px;
  ${(p) => p.$now && css`background: #555;`}
  span { white-space: nowrap; }
  b {
    align-self: stretch;
    height: 15px;
    margin-top: 1px;
    border-left: ${(p) => (p.$tick ? "2px solid #858585" : "0")};
    color: #fff;
    font-weight: 400;
  }
`;
const Playback = styled.div`
  display: flex;
  justify-content: space-between;
  width: 179px;
  margin: 0 4px 4px 9px;
`;
const RangeTrack = styled.div`
  flex: 1;
  height: 25px;
  margin: 0 7px;
  padding: 2px 5px;
  background: ${c.dark};
`;
const RangeThumb = styled.div`
  display: flex;
  align-items: center;
  gap: 4px;
  width: 61%;
  height: 21px;
  padding: 0 3px;
  border-radius: 3px;
  background: ${c.mid};
`;
const Grip = styled.i`
  width: 15px;
  height: 14px;
  border-radius: 3px;
  background: #929292;
`;
const HelpLine = styled.div`
  flex: 1;
  display: flex;
  align-items: center;
  gap: 8px;
  align-self: stretch;
  padding-left: 6px;
  border-right: 2px solid ${c.dark};
  color: #eee;
  font: 10px/14px Lato, "Open Sans", sans-serif;
`;
const CommandSide = styled.div`
  flex: 0 0 934px;
  align-self: stretch;
  display: flex;
  align-items: center;
  gap: 3px;
  padding-left: 4px;
`;
const MelLabel = styled.label`
  display: flex;
  flex: 380 1 0;
  align-items: center;
  gap: 14px;
  padding-left: 11px;
  color: #eee;
`;
const Output = styled.div`
  display: flex;
  flex: 500 1 0;
  padding-right: 3px;
`;
const Desktop = styled.div`
  flex: none;
  height: 5px;
  background: linear-gradient(90deg, #142a3c, #16302f 12%, #13293b 25%, #1b3138 60%, #132b40);
`;

/* ---------- viewport scenes ---------- */
const gridLines = (cx: number, cy: number, s: number, b: [number, number, number, number]) => {
  const [x0, y0, x1, y1] = b;
  let d = "";
  for (let i = Math.ceil((x0 - cx) / s); cx + i * s < x1; i++) d += `M${Math.round(cx + i * s) + 0.5} ${y0}V${y1}`;
  for (let i = Math.ceil((y0 - cy) / s); cy + i * s < y1; i++) d += `M${x0} ${Math.round(cy + i * s) + 0.5}H${x1}`;
  return (
    <g stroke="#404040" shapeRendering="crispEdges">
      <path d={d} /><path d={`M${cx} ${y0}V${y1}M${x0} ${cy}H${x1}`} strokeWidth="2" />
    </g>
  );
};
const Axis = ({ x, y, v }: { x: number; y: number; v: [string, number, number, number, number][] }) => {
  const col: Record<string, string> = { x: "#f00", y: "#0e0", z: "#00f" };
  return (
    <g transform={`translate(${x} ${y})`} fontFamily="Liberation Mono" fontWeight="700" fontSize="11" textAnchor="middle">
      {v.map(([n, dx, dy, tx, ty]) => (
        <g key={n}><path d={`M0 0L${dx} ${dy}`} stroke={col[n]} /><text x={tx} y={ty} fill={col[n]}>{n}</text></g>
      ))}
    </g>
  );
};

const TopScene = (
  <>
    {gridLines(644, 361, 20.45, [-200, -200, 1600, 900])}
    <defs>
      <linearGradient id="rodTop" x1="0" y1="0" x2="0" y2="1"><stop offset="0" stopColor="#1d1d1d" /><stop offset=".25" stopColor="#333" /><stop offset=".45" stopColor="#777" /><stop offset="1" stopColor="#8d8d8d" /></linearGradient>
      <linearGradient id="rodL"><stop offset="0" stopColor="#484848" /><stop offset=".35" stopColor="#777" /><stop offset="1" stopColor="#8d8d8d" /></linearGradient>
      <linearGradient id="rodR"><stop offset="0" stopColor="#8d8d8d" /><stop offset=".7" stopColor="#848484" /><stop offset="1" stopColor="#4a4a4a" /></linearGradient>
      <linearGradient id="rodB" x1="0" y1="0" x2="0" y2="1"><stop offset="0" stopColor="#949494" /><stop offset=".7" stopColor="#8d8d8d" /><stop offset=".95" stopColor="#6c6c6c" /></linearGradient>
      <linearGradient id="body" x1="0" y1="0" x2="0" y2="1"><stop offset="0" stopColor="#909090" /><stop offset=".5" stopColor="#8a8a8a" /><stop offset="1" stopColor="#6a6a6a" /></linearGradient>
    </defs>
    <path d="M615 259H672L719 283 746 332V386L718 436 671 463H617L569 436 542 387V332L570 284z" fill="none" stroke="#919191" strokeWidth="6" />
    <path d="M641 264h6v48h-6z" fill="url(#rodTop)" />
    <path d="M548 358h56v6h-56z" fill="url(#rodL)" /><path d="M684 359h54v6h-54z" fill="url(#rodR)" />
    <path d="M621 312H667L687 325 695 357V365L687 395 662 408H627L602 395 594 365V357L601 325z" fill="url(#body)" />
    <path d="M667 312L687 325 695 357V365L687 395 662 408H627L602 395 594 365V357L601 325 621 312" fill="none" stroke="#000" strokeDasharray="4 1" />
    <path d="M626 325H663L677 333 684 361 677 392 660 400H628L611 392 604 361 611 333z" fill="#929292" />
    <path d="M637 342h14l10 7 3 12-3 12-10 7h-14l-10-7-3-12 3-12z" fill="#555" stroke="#222" />
    <path d="M638 345h12l8 5 3 11-3 10-8 5h-12l-8-5-3-10 3-11z" fill="#727272" /><circle cx="644" cy="359" r="11" fill="#808080" /><circle cx="644" cy="359" r="6" fill="#8e8e8e" />
    <path d="M641 380h6v80h-6z" fill="url(#rodB)" />
    <Axis x={341} y={505} v={[["x", 13, 0, 16, 0], ["z", 0, 13, 0, 15], ["y", 0, 0, 0, 0]]} />
  </>
);

const Lamp = ({ side }: { side?: boolean }) => (
  <g transform={side ? "translate(640 42)" : undefined}>
    <path d="M583 618h16v98h-16z" fill="#646464" /><path d="M599 618h32v98h-32z" fill="#868686" /><path d="M631 618h37v98h-37z" fill="#919191" />
    <path d="M668 618h32v98h-32z" fill="#878787" /><path d="M700 618h17v98h-17z" fill="#616161" /><path d="M581 618h1v98h-1z" fill="#999" />
    <path d="M597 717q52 13 104 0" fill="none" stroke="#939393" strokeWidth="4" />
    <path d="M643 716h12v2h-3v7h-5v-7h-4z" fill="#000" /><path d="M647 725h5v9h-5z" fill="#999" /><path d="M643 733h12v3h-12z" fill="#888" />
    <path d="M641 736h17l-2 50-3 60h-9l-2-60z" fill="#5a5a5a" /><path d="M644 737h11l-2 60-1 60h-5l-1-60z" fill="#878787" />
    <path d="M643 856h12v3h-12z" fill="#939393" />
    {side ? (
      <path d="M625 859h50q5 2 6 7h-16l-2 1h-28l-2-1h-14q1-5 6-7z" fill="#878787" />
    ) : (
      <><defs><linearGradient id="base"><stop offset="0" stopColor="#222" /><stop offset=".3" stopColor="#858585" /><stop offset=".7" stopColor="#858585" /><stop offset="1" stopColor="#222" /></linearGradient></defs>
        <path d="M623 859h54l5 7h-64z" fill="url(#base)" /><path d="M617 866h65M634 865.500h30" stroke="#000" strokeWidth="1.500" /></>
    )}
  </g>
);
const FrontScene = (
  <>
    {gridLines(649, 865, 13.2, [-200, 200, 1600, 1300])}
    <Lamp />
    <Axis x={341} y={888} v={[["x", 13, 0, 16, 0], ["z", 0, 0, 0, 0], ["y", 0, -13, 0, -16]]} />
  </>
);
const SideScene = (
  <>
    {gridLines(1289, 907, 13.2, [500, 200, 2300, 1300])}
    <Lamp side />
    <Axis x={1004} y={888} v={[["x", 0, 0, 0, 0], ["z", -14, 0, -16, 0], ["y", 0, -13, 0, -16]]} />
  </>
);
const PerspScene = (
  <>
    <path d="M1025 509L1240 494H1340L1566 510 1340 517H1250z" fill="#404040" />
    <path d="M1250 499h110M1225 502h60M1330 502h60M1190 505h20M1400 505h20" stroke="#5d5d5d" strokeDasharray="5 9" />
    <g stroke="#00005f" strokeLinejoin="round">
      <path d="M1302 201L1258 206 1231 220 1225 237 1221 338 1236 349 1263 357 1289 359H1315L1334 357 1363 350 1379 340 1377 242 1371 222 1344 207z" fill="#a6a6a6" />
      <path d="M1221 338L1228 326 1257 316 1302 313 1346 317 1373 328 1379 340M1224 339L1231 327 1258 319 1302 316 1345 319 1371 330 1376 340M1224 336L1238 347 1264 354 1290 356H1315L1334 354 1362 348 1377 337" fill="none" />
      <path d="M1258 206L1257 316M1344 207L1346 317M1231 220L1228 326M1371 222L1373 328" fill="none" strokeWidth="2" />
      <path d="M1302 201V313M1225 237L1228 326M1240 324V349M1264 318V356M1331 318V356M1361 325V350M1238 330v7" fill="none" />
      <path d="M1251 320Q1272 344 1299 345M1257 318Q1275 337 1299 340M1352 320Q1330 344 1299 345M1346 318Q1328 337 1299 340M1252 327L1256 349 1274 354 1297 349M1256 327L1260 345 1276 350 1296 346M1347 327L1343 347 1324 354 1301 349M1343 327L1339 345 1324 350 1302 346M1266 330l-3 5M1278 338l-4 5M1337 330l3 5M1326 338l4 5" fill="none" />
      <path d="M1286 316H1314L1307 340H1292zM1287 321H1313M1289 326H1311M1291 334H1309M1295 316V340M1304 316V340M1290 316L1295 338M1310 316L1305 338" fill="none" />
      <path d="M1293 340H1306L1302 346V354H1296V346z" fill="#55558a" />
      <path d="M1290 359H1310L1303 498H1295z" fill="#a6a6a6" />
      <path d="M1292 354H1307V359H1290zM1299 359V498M1293 359L1297 498M1308 359L1302 498" fill="none" />
      <path d="M1257 511L1289 509H1315L1342 511 1300 513H1268z" fill="#8c8c9c" />
    </g>
    <path d="M1272 506h4M1286 503h5M1295 500h3M1312 502h4M1328 504h4M1301 508h3" stroke="#c0c0c0" />
    <g>
      <path d="M1578 216L1547 228 1545 270 1578 264z" fill="#ababab" /><path d="M1578 216L1608 228 1609 269 1578 264z" fill="#a2a2a2" />
      <path d="M1545 270L1578 264 1609 269 1578 275z" fill="#c0c0c0" stroke="#8a8a8a" /><path d="M1578 216v48" stroke="#808080" strokeWidth="2" />
      <text fontSize="8" fontWeight="700" fontFamily="Liberation Sans" fill="#4a4a4a" textAnchor="middle" transform="translate(1562 247) rotate(-12)">FRONT</text>
      <text fontSize="8" fontWeight="700" fontFamily="Liberation Sans" fill="#4a4a4a" textAnchor="middle" transform="translate(1594 247) rotate(12)">RIGHT</text>
    </g>
    <Axis x={1004} y={505} v={[["x", 10, -2, 12, -2], ["z", -10, -2, -11, -2], ["y", 0, -13, 0, -15]]} />
  </>
);

const viewTools = ["|", "cam", "camLock", "camGear", "mark", "plane", "pan", "pencil", "|", "grid", "film", "res", "gate", "chart", "safe", "title", "|", "wire", "shade", "half", "wshade", "check", "bulb", "shadow", "|", "ao", "blur", "aa", "dof", "|", "iso", "|", "xray", "xrayJ", "xrayA", "|", "iris", "color"];

const View = ({ name, scene, box, active }: { name: string; scene: Draw; box: string; active?: boolean }) => (
  <ViewPanel aria-label={name} $active={active}>
    <Menu items={["View", "Shading", "Lighting", "Show", "Renderer", "Panels"]} h={19} />
    <ViewTools>
      {viewTools.map((t, i) =>
        t === "|" ? (
          <Sep key={i} w={i === 0 ? 10 : 11} h={15} />
        ) : (
          <IconButton key={i} aria-label={t} $w={19} $h={18} $on={t === "grid" || t === "shade" || (active && t === "wshade")}>
            <Svg $w={18} viewBox="0 0 18 18">{viewIcons[active && t === "shadow" ? "shadowOff" : t]}</Svg>
          </IconButton>
        )
      )}
    </ViewTools>
    <Canvas viewBox={box} preserveAspectRatio="xMidYMid slice">{scene}</Canvas>
  </ViewPanel>
);

const nodes = ["front", "Lamp_Panel", "Lamp_Panel10", "Lamp_Panel11", "Lamp_Panel12", "Lamp_Panel13", "Lamp_Panel14", "Lamp_Panel4", "Lamp_Panel5", "Lamp_Panel6", "Lamp_Panel7", "Lamp_Panel8", "Lamp_Panel9", "pCube1", "pCylinder1", "pCylinder2", "pCylinder3", "pCylinder4", "persp", "pSphere1", "side", "Support_Rod", "Support_Rod1", "Support_Rod2", "Support_Rod3", "top", "defaultLightSet", "defaultObjectSet"];
const cameras = ["front", "persp", "side", "top"];
const NodeIcon = ({ name }: { name: string }) => (
  <Svg $w={16} viewBox="0 0 16 16">
    {cameras.includes(name) ? (
      <path d="M1 4h9v8H1zM11 8l4-4v8z" fill={c.grey} />
    ) : name.startsWith("default") ? (
      <><circle cx="8" cy="8" r="7.300" fill="#333" stroke={c.grey} strokeWidth="1.200" /><path d="M7 4h5v8H9z" fill={c.teal} /><circle cx="6.500" cy="10" r="3" fill={c.grey} /></>
    ) : (
      <g transform="scale(.800) translate(0 2.500)">{quad(c.grey)}</g>
    )}
  </Svg>
);

const play: [string, Draw][] = [
  ["Go to start", <path d="M0 2h1.500v14H0zM9 3v12L2.500 9zM16.500 3v12L10 9z" />],
  ["Step back frame", <path d="M3 2h1.500v14H3zM14 3v12L6 9z" />],
  ["Step back key", <><path d="M3 2h3v13H3z" fill="#df7f3f" /><path d="M4 0h1v2H4zM4 15h1v2H4zM15 3v12L8 9z" /></>],
  ["Play backwards", <path d="M15 1v16L2 9z" />],
  ["Play forwards", <path d="M3 1v16l13-8z" />],
  ["Step forward key", <><path d="M12 2h3v13h-3z" fill="#df7f3f" /><path d="M13 0h1v2h-1zM13 15h1v2h-1zM3 3v12l7-6z" /></>],
  ["Step forward frame", <path d="M13.500 2H15v14h-1.500zM4 3v12l8-6z" />],
  ["Go to end", <path d="M16 2h1.500v14H16zM1 3v12l6.500-6zM8.500 3v12L15 9z" />],
];

const layerMarks: Draw[] = [
  <path d="M10 8V4H8l3-4 3 4h-2v7h-2z" fill={c.teal} />,
  <path d="M10 2h2v6h2l-3 3-3-3h2z" fill={c.teal} />,
  <path d="M9 0h2v3h3v2h-3v3H9V5H6V3h3z" fill={c.teal} />,
  <circle cx="10" cy="3.500" r="3.500" fill={c.teal} />,
];

export default function App() {
  return (
    <Shell>
      <Global />
      <TitleBar>
        <MayaLogo w={15} h={16} />
        <h1>Remodeled_Lamp.ma* - Autodesk MAYA 2023.1: C:\Users\jason\Documents\Git Repos\hello-world\Maya\scenes\Remodeled_Lamp.ma</h1>
        <WinButtons>
          {["M1 6h10", "M1.500 3.500h7v8h-7zM3.500 3V1.500h7v8H9", "M1 1l10 10M11 1L1 11"].map((d, i) => (
            <IconButton key={d} aria-label={["Minimize", "Restore", "Close"][i]} $w={12} $h={20}>
              <Svg $w={12} viewBox="0 0 12 12"><path d={d} fill="none" stroke="#000" /></Svg>
            </IconButton>
          ))}
        </WinButtons>
      </TitleBar>

      <MenuBar>
        <Svg $w={16} $h={15} viewBox="0 0 16 15"><path d="M8 0l3 3V1h2v4l3 3h-2v7h-4v-5H6v5H2V8H0z" fill={c.grey} /></Svg>
        <Menu pad={13} h={27} gap={15} items={["File", "Edit", "Create", "Select", "Modify", "Display", "Windows", "Mesh", "Edit Mesh", "Mesh Tools", "Mesh Display", "Curves", "Surfaces", "Deform", "UV", "Generate", "Cache", "Arnold", "Help"]} />
        <Spacer />
        <Workspace>Workspace: <Combo label="Workspace" value="General*" w={192} h={19} /></Workspace>
        <Gap $w={8} />
        <Svg $w={12} $h={17} viewBox="0 0 12 17"><path d="M0 7h12v10H0z" fill={c.grey} /><path d="M3 7V4a3 3 0 016 0v3" fill="none" stroke={c.grey} strokeWidth="1.600" /><path d="M5 10h2v4H5z" fill={K} /></Svg>
      </MenuBar>

      <StatusLine>
        <DotsV /><Gap $w={6} />
        <Combo label="Menu set" value="Modeling" w={98} h={20} />
        <Sep />
        <Tools names={["new", "open", "save", "undo", "redo"]} />
        <SepTri /><Sep />
        <Tools names={["hier", "obj", "comp"]} on="obj" />
        <SepTri /><Sep w={24} />
        <Tools names={["mGrid", "mCurve", "mPoint", "mCenter", "mPlane", "mLive"]} />
        <SmallTri w={18} />
        <Field $w={100} $h={22} $line aria-label="Live surface" defaultValue="No Live Surface" />
        <Sep w={26} /><SmallTri w={16} />
        <Field $w={99} $h={22} $line aria-label="Symmetry" defaultValue="Symmetry: Off" />
        <SepTri w={26} /><Sep w={20} />
        <Tools names={["rView", "rSeq", "ipr", "rSet", "ring", "rLay", "light", "pause"]} />
        <SepTri /><Sep />
        <Account>
          <Svg $w={14} $h={16} viewBox="0 0 14 16"><g fill="none" stroke="#ddd" strokeWidth="1.400"><circle cx="7" cy="5" r="3.800" /><path d="M1.500 15c0-7 11-7 11 0" /></g></Svg>
          <span>Ella Weiss</span>
          <Svg $w={10} $h={6} viewBox="0 0 10 6"><path d="M0 0h10L5 6z" fill="#eee" /></Svg>
          <Gap $w={0} />
          <Svg $w={15} viewBox="0 0 15 15"><circle cx="7.500" cy="7.500" r="6.500" fill="none" stroke="#ddd" strokeWidth="1.500" /><path d="M7.500 3v5H11" fill="none" stroke="#ddd" strokeWidth="1.500" /></Svg>
          30
        </Account>
        <Spacer />
        <Tools names={["mkit", "human", "attr", "tset", "chan"]} on="chan" />
      </StatusLine>

      <Shelf>
        <DotsV />
        <ShelfSide>
          <Svg $w={10} $h={6} viewBox="0 0 10 6"><path d="M0 1h10M0 4h10" stroke={c.grey} strokeWidth="1.800" /></Svg>
          <Svg $w={12} viewBox="0 0 12 12">{gear(6, 6, 3.2, c.grey)}</Svg>
        </ShelfSide>
        <ShelfBody>
          <ShelfTabs>
            {["Curves / Surfaces", "Poly Modeling", "Sculpting", "Rigging", "Animation", "Rendering", "FX", "FX Caching", "Custom", "Arnold", "MASH", "Motion Graphics", "XGen"].map((t) => (
              <Tab key={t} $on={t === "Poly Modeling"}>{t}</Tab>
            ))}
          </ShelfTabs>
          <ShelfIcons>
            <ShelfGrid>
              {shelfIcons.map(([n, d], i) => (
                <ShelfCell key={i}>
                  {n ? (
                    <IconButton aria-label={n} $w={30} $h={30}><Svg $w={28} viewBox="0 0 30 30">{d}</Svg></IconButton>
                  ) : (
                    <Svg $w={34} $h={34} viewBox="0 0 30 30">{d}</Svg>
                  )}
                </ShelfCell>
              ))}
            </ShelfGrid>
            <ShelfScroll>
              <Arrow d="up" />
              <Svg $w={10} viewBox="0 0 10 10"><circle cx="5" cy="5" r="5" fill={c.mid} /></Svg>
              <Arrow d="down" />
            </ShelfScroll>
          </ShelfIcons>
        </ShelfBody>
      </Shelf>

      <Main>
        <Toolbox>
          <DotsH $w={38} $h={5} />
          {toolbox.map(([n, d, on, h]) => (
            <IconButton key={n} aria-label={n} $w={36} $h={h} $on={on}><Svg $w={36} viewBox="0 0 36 36">{d}</Svg></IconButton>
          ))}
          <ToolGap />
          <IconButton aria-label="Last tool" $w={36} $h={36}>
            <Svg $w={24} viewBox="0 0 24 24"><path d="M.7.700h22.600v22.600H.7zM12 .7v22.600M.7 12h22.600" fill="none" stroke={c.grey} strokeWidth="1.400" /><path d="M6 0v24" stroke={c.orange} strokeWidth="1.600" strokeDasharray="6 3" /></Svg>
          </IconButton>
          <Rule />
          <IconButton aria-label="Single view" $w={36} $h={37}>
            <Svg $w={28} viewBox="0 0 28 28"><path d="M0 0h28v28H0z" fill={c.grey} /><path d="M3 3h22v22H3z" fill="none" stroke={K} strokeWidth="1.300" /><g transform="translate(4.500 7) scale(.950)">{quad(K)}</g></Svg>
          </IconButton>
          <IconButton aria-label="Four views" $w={36} $h={37}>
            <Svg $w={28} viewBox="0 0 28 28">{plusBox(1, 1)}{plusBox(1, 15)}{plusBox(15, 15)}<path d="M15 0h13v13H15z" fill={c.grey} /><path d="M21.500 3l5 3.500-5 3.500-5-3.500z" fill={K} /></Svg>
          </IconButton>
          <IconButton aria-label="Two views" $w={36} $h={37}>
            <Svg $w={28} viewBox="0 0 28 28">{plusBox(1, 1, 26)}<path d="M15 0h13v28H15z" fill={c.grey} /><path d="M21.500 10l5 4-5 4-5-4z" fill={K} /></Svg>
          </IconButton>
          <IconButton aria-label="Outliner view" $w={36} $h={36} $on>
            <Svg $w={30} viewBox="0 0 30 30"><path d="M1 1h28v28H1zM4 4h22v22H4z" fill="none" stroke={K} strokeWidth="1.300" /><path d="M1.500 1.500h27v27h-27z" fill="none" stroke={c.grey} /><path d="M7 7v18M10 7h11M16 12h10M16 18h6M16 24h8" stroke={c.grey} strokeWidth="2" /><path d="M6 5h4v4H6zM12 10h4v4h-4zM12 16h4v4h-4zM12 22h4v4h-4z" fill="#ddd" stroke={K} /></Svg>
          </IconButton>
          <Rule />
          <IconButton aria-label="Search" $w={36} $h={36}>
            <Svg $w={24} viewBox="0 0 24 24"><circle cx="9.500" cy="9.500" r="8" fill="none" stroke={c.grey} strokeWidth="2" /><path d="M15 15l7.500 7.500" stroke={c.grey} strokeWidth="3" /></Svg>
          </IconButton>
          <Spacer />
          <MayaLogo w={30} h={32} />
        </Toolbox>

        <Outliner>
          <PanelTabs $h={18}><Tab $on>Outliner</Tab></PanelTabs>
          <PanelBody>
            <Menu pad={7} h={23} items={["Display", "Show", "Help"]} />
            <SearchRow>
              <Svg $w={15} $h={16} viewBox="0 0 15 16"><path d="M3 3v10M12 3v10M5 1h5M5 15h5" fill="none" stroke="#6a6a6a" strokeWidth="1.200" strokeDasharray="2 1" /><path d="M0 0v5l4-3zM15 2l-4-2v5zM0 11v5l4-2zM15 14l-4-3v5z" fill="#6a6a6a" /></Svg>
              <SearchBox>
                <input aria-label="Search" placeholder="Search..." />
                <Svg $w={10} $h={6} viewBox="0 0 10 6"><path d="M0 0h10L5 6z" fill={c.grey} /></Svg>
              </SearchBox>
            </SearchRow>
            <Tree>
              <ul>{nodes.map((n) => <TreeItem key={n} $dim={cameras.includes(n)}><NodeIcon name={n} />{n}</TreeItem>)}</ul>
              <ScrollV><Arrow d="up" /><Thumb /><Arrow d="down" /></ScrollV>
              <ScrollH><Arrow d="left" /><Thumb /><Arrow d="right" /></ScrollH>
            </Tree>
            <PanelFoot $h={10}><DotsH $w={85} /></PanelFoot>
          </PanelBody>
        </Outliner>

        <Viewports>
          <View name="Top view" scene={TopScene} box="316 191 656 339" />
          <View name="Perspective view" scene={PerspScene} box="979 191 656 339" active />
          <View name="Front view" scene={FrontScene} box="316 575 656 339" />
          <View name="Side view" scene={SideScene} box="979 575 656 339" />
        </Viewports>

        <Side>
          <SideIcons>
            <Svg $w={14} viewBox="0 0 14 14"><path d="M7 0l2.500 4h-5z" fill="#6fae3b" /><path d="M0 9l5 4-1 1H0z" fill="#4f83e0" /><path d="M14 9l-5 4 1 1h4z" fill="#d9534f" /><path d="M7 4v5M7 9l-3 3M7 9l3 3" stroke={c.grey} strokeWidth="1.500" /></Svg>
            <Svg $w={14} viewBox="0 0 14 14"><path d="M2.500 12A5.300 5.300 0 1112 9.500" fill="none" stroke={c.teal} strokeWidth="3.600" /><path d="M7 7l4 2" stroke={c.teal} strokeWidth="2" /><path d="M10 10l4-1-1 5z" fill="#888" /></Svg>
            <Svg $w={14} viewBox="0 0 14 14"><path d="M1 0v13h13" fill="none" stroke="#8a8a8a" /><path d="M4 10l8-8M8 2h4v4" fill="none" stroke={c.teal} strokeWidth="1.800" /></Svg>
          </SideIcons>
          <Menu pad={12} h={18} items={["Channels", "Edit", "Object", "Show"]} />
          <Message>Select objects in the scene to view, edit and set keyframes on channels (attributes)</Message>
          <PanelFoot $h={10}><DotsH $w={85} /></PanelFoot>
          <Layers>
            <PanelTabs $h={17}><Tab $on>Display</Tab><Tab>Anim</Tab></PanelTabs>
            <Menu pad={9} h={21} items={["Layers", "Options", "Help"]} />
            <LayerIcons>
              {layerMarks.map((m, i) => (
                <IconButton key={i} aria-label={`Layer action ${i + 1}`} $w={15} $h={14}><Svg $w={15} $h={12} viewBox="0 0 15 12"><path d="M0 7l6-4 6 4-6 4z" fill={c.grey} />{m}</Svg></IconButton>
              ))}
            </LayerIcons>
            <LayerList />
            <LayerScroll><Arrow d="left" /><Thumb $grow={70} /><Rest $grow={28} /><Arrow d="right" /></LayerScroll>
          </Layers>
        </Side>
        <SideTabs>
          <SideTab $on $h={155}>Channel Box / Layer Editor</SideTab>
          <SideTab $h={102}>Attribute Editor</SideTab>
          <SideTab $h={109}>Modeling Toolkit</SideTab>
        </SideTabs>
      </Main>

      <Bar $h={43}>
        <DotsV />
        <Timeline>
          {Array.from({ length: 120 }, (_, i) => i + 1).map((n) => (
            <Frame key={n} $tick={n % 5 === 0} $now={n === 75}>
              <span>{n % 5 === 0 ? n : "\u00a0"}</span>
              <b>{n === 75 ? n : ""}</b>
            </Frame>
          ))}
        </Timeline>
        <Gap $w={7} />
        <Field $w={88} $h={18} aria-label="Current frame" defaultValue="75" />
        <Playback>
          {play.map(([n, d]) => <IconButton key={n} aria-label={n} $w={18} $h={18}><Svg $w={18} viewBox="0 0 18 18" fill={c.grey}>{d}</Svg></IconButton>)}
        </Playback>
      </Bar>

      <Bar $h={37}>
        <DotsV /><Gap $w={6} />
        <Field $w={88} $h={25} aria-label="Animation start" defaultValue="1" />
        <Gap $w={8} />
        <Field $w={88} $h={25} aria-label="Playback start" defaultValue="1" />
        <RangeTrack><RangeThumb><Grip /><span>1</span><Spacer /><span>120</span><Grip /></RangeThumb></RangeTrack>
        <Field $w={88} $h={25} aria-label="Playback end" defaultValue="120" />
        <Gap $w={8} />
        <Field $w={88} $h={25} aria-label="Animation end" defaultValue="200" />
        <Sep w={12} />
        <IconButton aria-label="Add bookmark" $w={32} $h={22}><Svg $w={18} $h={20} viewBox="0 0 18 20"><path d="M3 2h8v17l-4-5-4 5z" fill="#e0743f" /><path d="M10 1h3v3h3v2h-3v3h-3V6H7V4h3z" fill="#ddd" stroke={c.bg} strokeWidth=".6" /></Svg></IconButton>
        <Sep w={12} />
        <IconButton aria-label="Character set" $w={25} $h={20}><Svg $w={9} $h={7} viewBox="0 0 9 7"><path d="M1 1h7L4.500 6z" fill={c.bg} stroke="#8a8a8a" /></Svg></IconButton>
        <Field $w={102} $h={25} $line aria-label="Character set name" defaultValue="No Character Set" />
        <IconButton aria-label="Anim layer" $w={27} $h={20}><Svg $w={9} $h={7} viewBox="0 0 9 7"><path d="M1 1h7L4.500 6z" fill={c.bg} stroke="#8a8a8a" /></Svg></IconButton>
        <Field $w={102} $h={25} $line aria-label="Anim layer name" defaultValue="No Anim Layer" />
        <Sep w={23} />
        <Combo label="Frame rate" value="24 fps" w={95} h={19} />
        <Gap $w={8} />
        <IconButton aria-label="Loop" $w={28} $h={22}><Svg $w={20} viewBox="0 0 20 20"><path d="M2 9c0-4 2-5 5-5h7M10 14H7c-3 0-5-1-5-3" fill="none" stroke={c.grey} strokeWidth="2" /><path d="M12 0l6 4-6 4zM9 10v8l-5-4z" fill={c.grey} /><circle cx="14" cy="14" r="5" fill="#ddd" /><path d="M14.500 11v6" stroke={K} strokeWidth="1.600" /></Svg></IconButton>
        <Gap $w={3} />
        <IconButton aria-label="Cached playback" $w={23} $h={23} $on><Svg $w={19} viewBox="0 0 19 19"><path d="M1 3h17v14H1z" fill="#e88a45" stroke={K} /><path d="M3 7h13v6H3z" fill={K} /><path d="M4 8h3v4H4zM8 8h3v4H8zM12 8h3v4h-3z" fill="#ddd" /><path d="M2 5h15M2 15h15" stroke={K} strokeDasharray="2 1" /><path d="M11 0l6 5h-3l-3 3z" fill="#ddd" /></Svg></IconButton>
        <Sep w={19} />
        <IconButton aria-label="Sound" $w={26} $h={22}><Svg $w={18} viewBox="0 0 18 18"><path d="M1 6h4l5-4v14l-5-4H1z" fill={c.grey} /><path d="M12 6q2 3 0 6M14 3.500q4 5.500 0 11" fill="none" stroke={c.grey} strokeWidth="1.200" /></Svg></IconButton>
        <Gap $w={3} />
        <IconButton aria-label="Auto key" $w={28} $h={22}><Svg $w={18} viewBox="0 0 18 18"><path d="M4 3a8 8 0 0112 4M14 15A8 8 0 012 11M1 6q0-2 2-3M17 12q-1 2-3 3" fill="none" stroke={c.grey} strokeWidth="1.600" /><path d="M1 3h5v5zM17 15h-5v-5z" fill={c.grey} /><path d="M8 5h2v8H8z" fill="#e0743f" /></Svg></IconButton>
        <IconButton aria-label="Preferences" $w={28} $h={22}><Svg $w={20} viewBox="0 0 20 20">{gear(5, 5, 3, c.grey)}<circle cx="14" cy="5" r="2" fill="#df8a45" /><path d="M7 9l5-2 3 3 4-1M12 8l-2 6 4 2v4M10 13l-2 4H5" fill="none" stroke="#df8a45" strokeWidth="2.200" /></Svg></IconButton>
      </Bar>

      <Bar $h={34}>
        <DotsV />
        <HelpLine>
          <Svg $w={16} viewBox="0 0 16 16"><circle cx="8" cy="8" r="8" fill="#8dbb3c" /><text x="8" y="12.500" fontSize="13" fontWeight="700" fontFamily="Open Sans" textAnchor="middle" fill="#222">?</text></Svg>
          Scale Tool: Select an object to scale.
        </HelpLine>
        <CommandSide>
          <DotsV />
          <MelLabel>MEL <Field $h={22} aria-label="Command line" /></MelLabel>
          <DotsV />
          <Output><Field $h={20} readOnly aria-label="Command result" /></Output>
          <IconButton aria-label="Script editor" $w={19} $h={20}><Svg $w={18} viewBox="0 0 18 18"><path d="M0 0h18v3H0zM0 4h18v14H0z" fill={c.grey} /><path d="M1 1.500h5" stroke={K} strokeDasharray="1.500 .500" /><text x="9" y="15" fontSize="11" fontWeight="700" fontFamily="Open Sans" textAnchor="middle" fill={K}>{"{;}"}</text></Svg></IconButton>
        </CommandSide>
      </Bar>
      <Desktop />
    </Shell>
  );
}
